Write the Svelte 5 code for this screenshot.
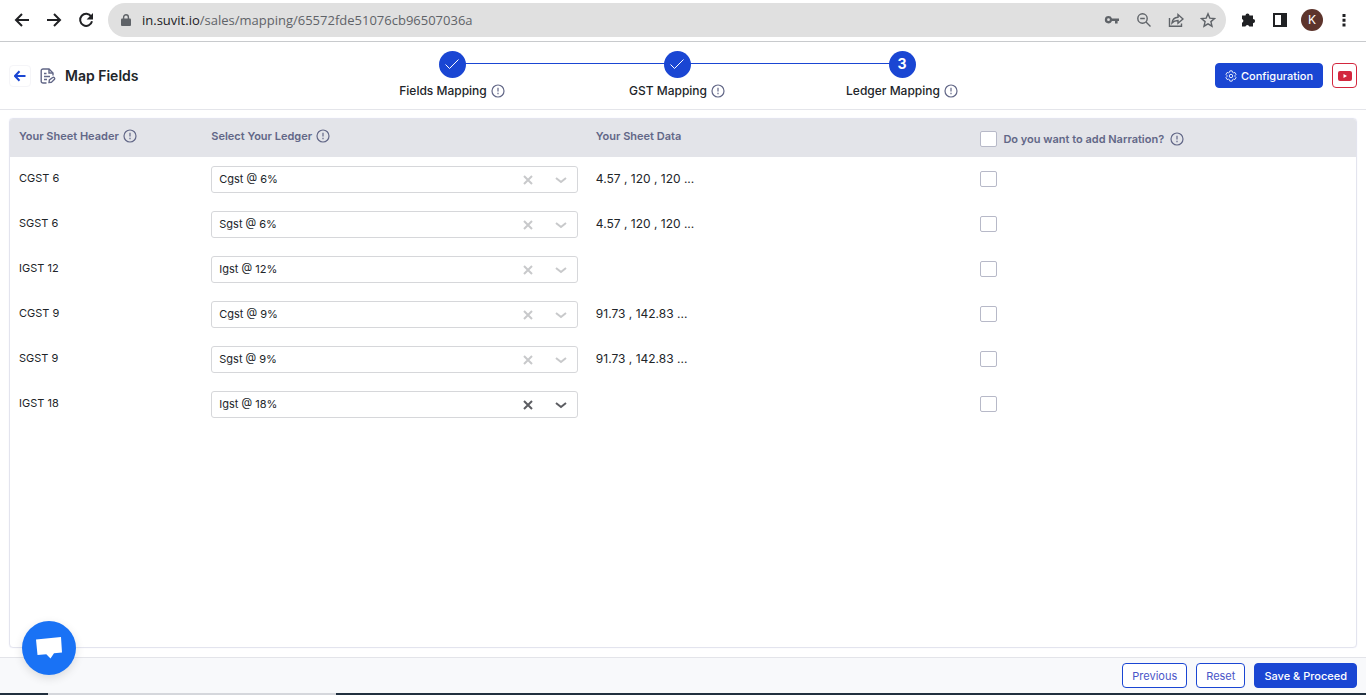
<script lang="ts">
  let steps = [
    { label: 'Fields Mapping', done: true },
    { label: 'GST Mapping', done: true },
    { label: 'Ledger Mapping', done: false },
  ];

  let ledgers = ['Cgst @ 6%', 'Sgst @ 6%', 'Igst @ 12%', 'Cgst @ 9%', 'Sgst @ 9%', 'Igst @ 18%'];

  let rows = [
    { header: 'CGST 6', ledger: 'Cgst @ 6%', data: '4.57 , 120 , 120 ...', narration: false },
    { header: 'SGST 6', ledger: 'Sgst @ 6%', data: '4.57 , 120 , 120 ...', narration: false },
    { header: 'IGST 12', ledger: 'Igst @ 12%', data: '', narration: false },
    { header: 'CGST 9', ledger: 'Cgst @ 9%', data: '91.73 , 142.83 ...', narration: false },
    { header: 'SGST 9', ledger: 'Sgst @ 9%', data: '91.73 , 142.83 ...', narration: false },
    { header: 'IGST 18', ledger: 'Igst @ 18%', data: '', narration: false },
  ];

  let initial = rows.map((r) => ({ ...r }));
  let activeRow = 5;
  let allNarration = false;

  function toggleAll() {
    rows = rows.map((r) => ({ ...r, narration: allNarration }));
  }

  function clearLedger(i: number) {
    rows[i].ledger = '';
    activeRow = i;
  }

  function reset() {
    rows = initial.map((r) => ({ ...r }));
    allNarration = false;
  }
</script>

{#snippet info()}
  <svg class="info" viewBox="0 0 14 14" width="14" height="14" aria-hidden="true">
    <circle cx="7" cy="7" r="6" />
    <path d="M7 3.8v3.6M7 8.8v1.4" />
  </svg>
{/snippet}

<div class="page">
  <div class="browser">
    <button class="nav" aria-label="Back">
      <svg viewBox="0 0 16 16" width="16" height="16"><path d="M15 8H2M8 2L2 8l6 6" /></svg>
    </button>
    <button class="nav" aria-label="Forward">
      <svg viewBox="0 0 16 16" width="16" height="16"><path d="M1 8h13M8 2l6 6-6 6" /></svg>
    </button>
    <button class="nav" aria-label="Reload">
      <svg viewBox="0 0 16 16" width="16" height="16">
        <path d="M13.2 4.6A6 6 0 1 0 14 9.2" />
        <path class="solid" d="M15 1v6.4H8.6z" />
      </svg>
    </button>
    <div class="address">
      <svg class="lock" viewBox="0 0 10 12" width="10" height="12">
        <rect x="0" y="4.500" width="10" height="7.500" rx="1" />
        <path d="M2.600 5V3.200a2.400 2.400 0 0 1 4.800 0V5" />
      </svg>
      <span class="url"><b>in.suvit.io</b>/sales/mapping/65572fde51076cb96507036a</span>
      <button aria-label="Passwords">
        <svg viewBox="0 0 16 16" width="16" height="16">
          <path
            class="fill"
            fill-rule="evenodd"
            d="M4.500 4a3.700 3.700 0 1 0 3.500 5H11v2.500h2.600V9H15V6.400H8A3.700 3.700 0 0 0 4.500 4zm0 2.300a1.400 1.400 0 1 1 0 2.800 1.400 1.400 0 0 1 0-2.800z"
          />
        </svg>
      </button>
      <button aria-label="Zoom">
        <svg viewBox="0 0 16 16" width="16" height="16">
          <circle cx="6.500" cy="6.500" r="4.700" />
          <path d="M10 10l4.500 4.500M4.200 6.500h4.600" />
        </svg>
      </button>
      <button aria-label="Share">
        <svg viewBox="0 0 16 16" width="16" height="16">
          <path d="M1.500 6v8.200h12V11.500" />
          <path d="M4 11c.4-3.600 2.600-5.500 6-5.700V2.500L15 7l-5 4.300V8.500c-2.700 0-4.500.8-6 2.500z" />
        </svg>
      </button>
      <button aria-label="Bookmark">
        <svg viewBox="0 0 16 16" width="16" height="16">
          <path d="M8 1.800l1.800 4.300 4.700.4-3.600 3.100 1.100 4.600L8 11.800l-4 2.400 1.100-4.600-3.600-3.100 4.700-.4z" />
        </svg>
      </button>
    </div>
    <button class="nav" aria-label="Extensions">
      <svg viewBox="0 0 16 16" width="16" height="16">
        <path
          class="solid"
          d="M2 3.500h3.500a2 2 0 0 1 4 0H13V7a2.100 2.100 0 0 1 0 4.200v3.300H9.300a2 2 0 0 0-3.900 0H2v-3.800a2 2 0 0 0 0-3.800z"
        />
      </svg>
    </button>
    <button class="nav" aria-label="Side panel">
      <svg viewBox="0 0 16 16" width="16" height="16">
        <path class="solid" fill-rule="evenodd" d="M1 1h14v14H1zM3 3v10h6V3z" />
      </svg>
    </button>
    <button class="avatar" aria-label="Profile">K</button>
    <button class="nav" aria-label="Menu">
      <svg viewBox="0 0 16 16" width="16" height="16">
        <path class="solid" d="M6.500 2h3v3h-3zM6.500 6.700h3v3h-3zM6.500 11.400h3v3h-3z" />
      </svg>
    </button>
  </div>

  <header>
    <div class="title">
      <button class="back" aria-label="Go back">
        <svg viewBox="0 0 12 12" width="12" height="12"><path d="M11.500 6H1M5.500 1.200L1 6l4.500 4.800" /></svg>
      </button>
      <svg class="doc" viewBox="0 0 16 16" width="16" height="16">
        <path d="M6.500 15H3a1.800 1.800 0 0 1-1.800-1.800V2.800A1.800 1.800 0 0 1 3 1h6l4 4v2.500" />
        <path d="M9 1v4h4M4 5.500h2.500M4 8.500h6M4 11.500h3" />
        <path d="M9 14.500l.4-2.500 3.300-2.500a1.300 1.300 0 0 1 1.800 1.800L11.300 14.400z" />
      </svg>
      <h1>Map Fields</h1>
    </div>

    <ol class="steps">
      {#each steps as step, i}
        <li>
          <span class="dot">
            {#if step.done}
              <svg viewBox="0 0 16 16" width="16" height="16"><path d="M1.500 8.500l4 4 9-9" /></svg>
            {:else}
              {i + 1}
            {/if}
          </span>
          <span class="label">{step.label} {@render info()}</span>
        </li>
      {/each}
    </ol>

    <div class="tools">
      <button class="btn primary">
        <svg viewBox="0 0 14 14" width="12" height="12">
          <path
            d="M5.700 1h2.600l.5 1.700 1.100.6 1.700-.4 1.300 2.200L11.700 6.400v1.200l1.200 1.300-1.300 2.200-1.700-.4-1.100.6-.5 1.700H5.700l-.5-1.700-1.100-.6-1.700.4-1.300-2.200 1.200-1.300V6.400L1.100 5.100l1.300-2.200 1.700.4 1.100-.6z"
          />
          <circle cx="7" cy="7" r="2" />
        </svg>
        Configuration
      </button>
      <button class="video" aria-label="Watch tutorial">
        <svg viewBox="0 0 16 12" width="16" height="12">
          <rect x="1" y="1" width="14" height="10" rx="2" />
          <path d="M6.500 4v4L10 6z" />
        </svg>
      </button>
    </div>
  </header>

  <main>
    <table>
      <thead>
        <tr>
          <th class="narrow"><span class="head">Your Sheet Header {@render info()}</span></th>
          <th><span class="head">Select Your Ledger {@render info()}</span></th>
          <th><span class="head">Your Sheet Data</span></th>
          <th>
            <label class="head check">
              <input type="checkbox" bind:checked={allNarration} on:change={toggleAll} />
              Do you want to add Narration?
              {@render info()}
            </label>
          </th>
        </tr>
      </thead>
      <tbody>
        {#each rows as row, i}
          <tr>
            <td>{row.header}</td>
            <td>
              <div class="ledger" class:active={i === activeRow}>
                <select bind:value={row.ledger} on:focus={() => (activeRow = i)} aria-label="Ledger for {row.header}">
                  {#each ledgers as ledger}
                    <option value={ledger}>{ledger}</option>
                  {/each}
                </select>
                <button class="clear" aria-label="Clear {row.header}" on:click={() => clearLedger(i)}>
                  <svg viewBox="0 0 12 12" width="12" height="12"><path d="M2 2l8 8M10 2l-8 8" /></svg>
                </button>
                <svg class="chevron" viewBox="0 0 12 12" width="12" height="12"><path d="M1 4l5 4 5-4" /></svg>
              </div>
            </td>
            <td class="data">{row.data}</td>
            <td class="check">
              <input type="checkbox" bind:checked={row.narration} aria-label="Add narration for {row.header}" />
            </td>
          </tr>
        {/each}
      </tbody>
    </table>
  </main>

  <footer>
    <button class="btn">Previous</button>
    <button class="btn" on:click={reset}>Reset</button>
    <button class="btn primary">Save &amp; Proceed</button>
  </footer>
  <div class="taskbar"><span></span></div>

  <button class="chat" aria-label="Open chat">
    <svg viewBox="0 0 26 24" width="26" height="24"><path d="M0 3.500L25 1l1 15.500-8 .8-3.500 5.200-4.200-4.200L1.500 19z" /></svg>
  </button>
</div>

<style>
  :global(body) {
    margin: 0;
  }
  .page {
    display: flex;
    flex-direction: column;
    min-height: 100vh;
    font-family: Inter, 'Liberation Sans', sans-serif;
    font-size: 12px;
    line-height: 16px;
    color: #212529;
    background: #fff;
  }
  button {
    display: flex;
    align-items: center;
    justify-content: center;
    padding: 0;
    border: none;
    background: none;
    font: inherit;
    cursor: pointer;
  }
  svg {
    flex: none;
    fill: none;
    stroke: currentColor;
  }

  /* browser bar */
  .browser {
    display: flex;
    align-items: center;
    gap: 16px;
    height: 40px;
    padding: 0 14px 1px;
    border-bottom: 1px solid #c8cacd;
  }
  .nav {
    color: #202124;
  }
  .nav svg {
    stroke-width: 2;
  }
  .nav .solid {
    fill: currentColor;
    stroke: none;
  }
  .address {
    flex: 1;
    display: flex;
    align-items: center;
    gap: 16px;
    height: 34px;
    margin: 0 -2px;
    padding: 0 10px 0 13px;
    border-radius: 17px;
    background: #e0e0e0;
    color: #5f6368;
  }
  .address button {
    color: #5f6368;
  }
  .address svg {
    stroke-width: 1.4;
  }
  .address .fill,
  .lock rect {
    fill: currentColor;
    stroke: none;
  }
  .url {
    flex: 1;
    margin-left: -5px;
    font-family: 'Open Sans', sans-serif;
    font-size: 13px;
  }
  .url b {
    font-weight: 400;
    color: #202124;
  }
  .avatar {
    width: 22px;
    height: 22px;
    margin: 0 -3px;
    border-radius: 50%;
    background: #5d342c;
    color: #fff;
  }

  /* page header */
  header {
    display: grid;
    grid-template-columns: 1fr auto 1fr;
    align-items: center;
    height: 67px;
    padding: 0 9px;
    border-bottom: 1px solid #e4e5ea;
  }
  .title {
    display: flex;
    align-items: center;
    gap: 9px;
  }
  .back {
    width: 22px;
    height: 22px;
    border: 1px solid #f5f5f8;
    border-radius: 4px;
    color: #1a46d3;
  }
  .back svg {
    stroke-width: 2;
  }
  .doc {
    color: #626787;
    stroke-width: 1.4;
  }
  h1 {
    margin: 0;
    font-size: 14px;
    font-weight: 600;
  }
  .steps {
    display: flex;
    margin: 0 12px 2px 0;
    padding: 0;
    list-style: none;
  }
  .steps li {
    position: relative;
    display: flex;
    flex-direction: column;
    align-items: center;
    gap: 5px;
    width: 225px;
  }
  .steps li + li::before {
    content: '';
    position: absolute;
    top: 12px;
    right: 50%;
    width: 100%;
    height: 1px;
    background: #1a46d3;
  }
  .dot {
    z-index: 1;
    display: flex;
    align-items: center;
    justify-content: center;
    width: 27px;
    height: 27px;
    border-radius: 50%;
    background: #1a46d3;
    color: #fff;
    font-size: 14px;
    font-weight: 700;
  }
  .label {
    display: flex;
    align-items: center;
    gap: 4px;
    font-weight: 500;
  }
  .info {
    color: #626787;
    stroke-width: 1.2;
  }
  .tools {
    display: flex;
    justify-content: flex-end;
    gap: 9px;
  }
  .btn {
    gap: 4px;
    height: 25px;
    padding: 0 9px;
    border: 1px solid #1a46d3;
    border-radius: 4px;
    background: #fff;
    color: #4a55c8;
    font-size: 11px;
  }
  .primary {
    background: #1a46d3;
    color: #fff;
    font-weight: 500;
  }
  .video {
    width: 25px;
    height: 25px;
    border: 1px solid #d3273e;
    border-radius: 4px;
    background: #fff;
  }
  .video rect {
    fill: #d3273e;
    stroke: none;
  }
  .video path {
    fill: #fff;
    stroke: none;
  }

  /* mapping table */
  main {
    flex: 1;
    margin: 8px 9px 9px;
    border: 1px solid #e3e4ee;
    border-radius: 4px;
    box-shadow: 0 0 1px #dcdff5;
    overflow: hidden;
  }
  table {
    width: 100%;
    table-layout: fixed;
    border-collapse: collapse;
    font-size: 11px;
  }
  th,
  td {
    padding: 9px;
    text-align: left;
    vertical-align: top;
  }
  th {
    height: 38px;
    box-sizing: border-box;
    background: #e3e4e9;
    color: #626787;
    font-weight: 600;
  }
  .narrow {
    width: calc(100% / 7);
  }
  .head {
    display: flex;
    align-items: center;
    gap: 4px;
  }
  label.check {
    gap: 6px;
    padding-top: 3px;
  }
  td {
    height: 27px;
    line-height: 25px;
  }
  td.check {
    height: 17px;
    padding: 14px 9px;
  }
  td.data {
    font-size: 12px;
  }
  input {
    appearance: none;
    display: block;
    width: 17px;
    height: 16px;
    margin: 0;
    border: 1px solid #b7b9c8;
    border-radius: 2px;
    background: #fff;
  }
  input:checked {
    background: #1a46d3;
  }
  .ledger {
    display: grid;
    grid-template-columns: 1fr 12px 12px;
    align-items: center;
    column-gap: 21px;
    height: 25px;
    padding-right: 10px;
    border: 1px solid #d6d7da;
    border-radius: 3px;
    color: #c8c9cb;
  }
  .ledger.active {
    color: #5c5d62;
  }
  .ledger svg {
    stroke-width: 2;
  }
  select {
    grid-area: 1 / 1 / 2 / 4;
    appearance: none;
    height: 25px;
    margin-right: -10px;
    padding: 0 7px;
    border: none;
    background: none;
    font: inherit;
    color: #212529;
  }
  .clear {
    grid-area: 1 / 2;
    color: inherit;
  }
  .chevron {
    grid-area: 1 / 3;
    pointer-events: none;
  }

  footer {
    display: flex;
    align-items: center;
    justify-content: flex-end;
    gap: 9px;
    height: 35px;
    padding: 0 9px;
    border-top: 1px solid #e3e4e9;
    background: #f8f9fb;
  }
  .taskbar {
    height: 2px;
    padding-left: 48px;
    background: #21303f;
  }
  .taskbar span {
    display: block;
    width: 288px;
    height: 2px;
    background: #d5d7dc;
  }
  .chat {
    position: fixed;
    left: 22px;
    bottom: 20px;
    width: 54px;
    height: 54px;
    border-radius: 50%;
    background: #1972f5;
    box-shadow: 0 3px 10px rgba(0, 0, 0, 0.12);
  }
  .chat svg {
    fill: #fff;
    stroke: none;
  }
</style>
